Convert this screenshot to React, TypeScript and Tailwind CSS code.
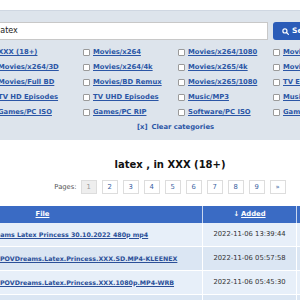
import React from "react";

const cols: string[][] = [
  ["XXX (18+)", "Movies/x264/3D", "Movies/Full BD", "TV HD Episodes", "Games/PC ISO"],
  ["Movies/x264", "Movies/x264/4k", "Movies/BD Remux", "TV UHD Episodes", "Games/PC RIP"],
  ["Movies/x264/1080", "Movies/x265/4k", "Movies/x265/1080", "Music/MP3", "Software/PC ISO"],
  ["Movies/x264/720", "Movies/x265/4k/HDR", "TV Episodes", "Music/FLAC", "Games/PS3"],
];

const rows = [
  { name: "POVDreams Latex Princess 30.10.2022 480p mp4", date: "2022-11-06 13:39:44", off: true },
  { name: "POVDreams.Latex.Princess.XXX.SD.MP4-KLEENEX", date: "2022-11-06 05:57:58", off: false },
  { name: "POVDreams.Latex.Princess.XXX.1080p.MP4-WRB", date: "2022-11-06 05:45:30", off: false },
  { name: "POVDreams.Latex.Princess.XXX.720p.MP4-WRB", date: "2022-11-06 05:40:12", off: false },
];

function Box({ label }: { label: string }) {
  return (
    <div className="flex items-center h-[15px] w-[95px] shrink-0">
      <span className="w-[7px] h-[7px] bg-white border border-[#9a9a9a] rounded-[1px] shrink-0" />
      <span className="ml-[3px] text-[6.8px] font-bold text-[#2b56a6] underline whitespace-nowrap leading-none">
        {label}
      </span>
    </div>
  );
}

export default function App() {
  const rowsOfBoxes = [0, 1, 2, 3, 4];
  return (
    <div className="w-[300px] h-[300px] overflow-hidden bg-white font-['DejaVu_Sans',sans-serif] relative">
      <div className="h-[10px]" />
      <div className="bg-[#dde4ec] h-[130px] pt-[11px] border-t border-[#cfd7e2]">
        <div className="flex ml-[-12px] w-[400px]">
          <div className="w-[280px] h-[18px] bg-white border border-[#c8c8c8] flex items-center pl-[9px] text-[8px] text-[#222]">
            latex
          </div>
          <div className="ml-[5px] w-[55px] h-[18px] bg-[#2b5cb8] rounded-[3px] flex items-center pl-[9px] text-white text-[7.5px] font-bold">
            <svg width="7" height="7" viewBox="0 0 24 24" fill="none" stroke="white" strokeWidth="4" strokeLinecap="round">
              <circle cx="10" cy="10" r="7" />
              <path d="M15.5 15.5 L22 22" />
            </svg>
            <span className="ml-[3px]">Search</span>
          </div>
        </div>
        <div className="ml-[-12px] mt-[5px] flex flex-col w-[400px]">
          {rowsOfBoxes.map((r) => (
            <div key={r} className="flex">
              {cols.map((c, i) => (
                <Box key={i} label={c[r]} />
              ))}
            </div>
          ))}
        </div>
        <div className="w-[340px] flex justify-center pl-[11px] h-[14px] items-center text-[6.8px] font-bold text-[#2b56a6] whitespace-nowrap">
          <span>[x]</span>
          <span className="ml-[4px]">Clear categories</span>
        </div>
      </div>

      <div className="w-[340px] mt-[18px] h-[12px] flex items-center justify-center text-[10px] font-bold text-[#111] whitespace-nowrap">
        latex , in XXX (18+)
      </div>

      <div className="w-[340px] mt-[10px] flex justify-center items-center gap-[5px] text-[6.8px] whitespace-nowrap">
        <span className="text-[#555] mr-[-1px]">Pages:</span>
        {["1", "2", "3", "4", "5", "6", "7", "8", "9", "»"].map((p, i) => (
          <span
            key={p}
            className={
              "w-[16px] h-[14px] flex items-center justify-center border " +
              (i === 0
                ? "bg-[#eeeeee] border-[#dddddd] text-[#999]"
                : "bg-white border-[#dddddd] text-[#3a5f9f]")
            }
          >
            {p}
          </span>
        ))}
      </div>

      <div className="mt-[12px] w-[400px]">
        <div className="flex h-[17px] bg-[#3a6bc4] text-white text-[6.8px] font-bold">
          <div className="w-[203px] border-r border-[#c9d6ee] flex items-center justify-center">
            <span className="underline mr-[117px]">File</span>
          </div>
          <div className="w-[94px] border-r border-[#c9d6ee] flex items-center justify-center">
            <span className="mr-[2px]">↓</span>
            <span className="underline">Added</span>
          </div>
          <div className="flex-1" />
        </div>
        {rows.map((r, i) => (
          <div
            key={i}
            className={
              "flex h-[24px] border-b border-white " + (i % 2 === 0 ? "bg-[#e7eff9]" : "bg-[#dbe6f3]")
            }
          >
            <div className="w-[203px] border-r border-white flex items-center overflow-hidden">
              <span
                className={
                  "text-[6.3px] font-bold underline text-[#2b4f98] whitespace-nowrap " +
                  (r.off ? "ml-[-27px]" : "ml-0")
                }
              >
                {r.name}
              </span>
            </div>
            <div className="w-[94px] border-r border-white flex items-center justify-center text-[6.8px] text-[#333] whitespace-nowrap">
              {r.date}
            </div>
            <div className="flex-1" />
          </div>
        ))}
      </div>
    </div>
  );
}
